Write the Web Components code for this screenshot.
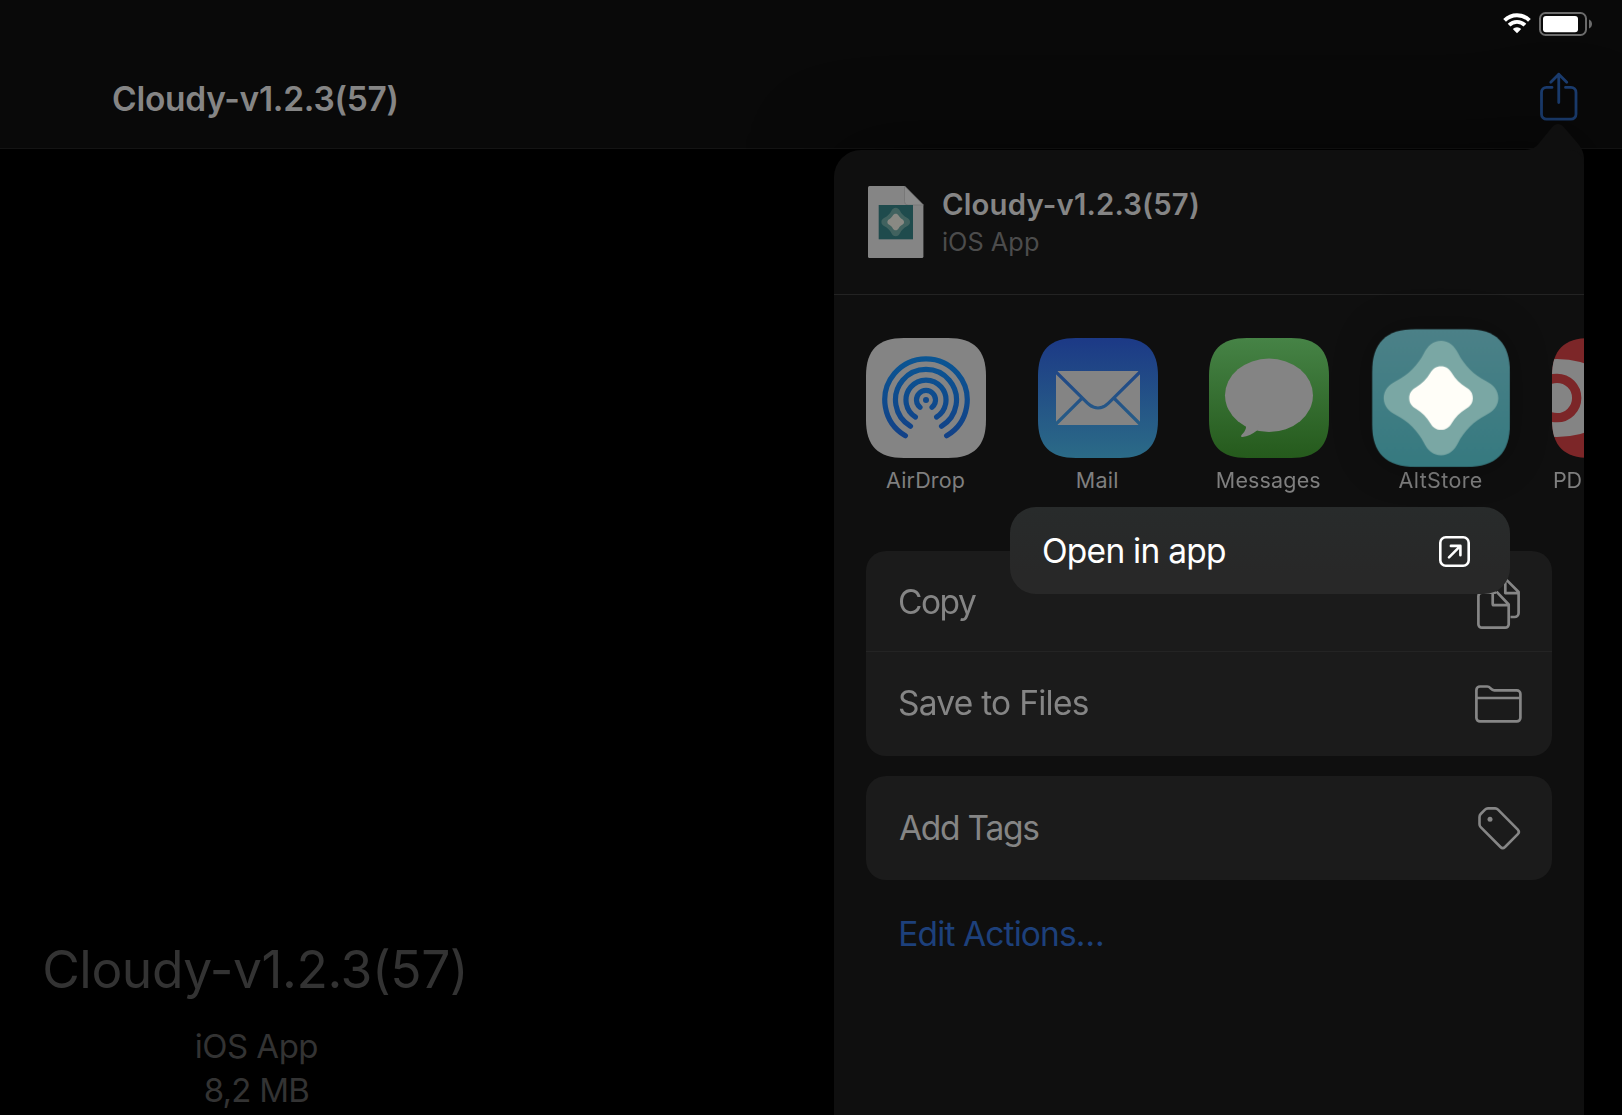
<!DOCTYPE html>
<html lang="en">
<head>
<meta charset="utf-8">
<title>Cloudy-v1.2.3(57)</title>
<style>
html,body{margin:0;background:#000}
body{width:1622px;height:1115px;overflow:hidden;font-family:Inter,"Liberation Sans",sans-serif;color:#858585}
</style>
</head>
<body>
<file-screen></file-screen>
<script>
const define = (name, html, extra) => customElements.define(name, class extends HTMLElement {
  constructor() {
    super();
    const t = document.createElement('template');
    t.innerHTML = html;
    this.attachShadow({mode: 'open'}).append(t.content.cloneNode(true));
  }
  connectedCallback() { if (extra) extra(this, this.shadowRoot); }
});

// Single line of text whose glyph box is exactly `ink` pixels wide; tracking absorbs the difference.
define('ui-label', `<style>
:host{display:block;flex:none;white-space:nowrap}
span{display:block;width:max-content}
</style><span></span>`, (host, root) => {
  const span = root.querySelector('span');
  const text = host.getAttribute('text');
  const size = +host.getAttribute('size'), weight = host.getAttribute('weight') || 400;
  const ink = +host.getAttribute('ink');
  const ctx = document.createElement('canvas').getContext('2d');
  ctx.font = `${weight} ${size}px Inter, "Liberation Sans", sans-serif`;
  const m = ctx.measureText(text);
  const natural = m.actualBoundingBoxLeft + m.actualBoundingBoxRight;
  span.textContent = text;
  span.style.font = `${weight} ${size}px/${Math.round(size * 1.3)}px Inter, "Liberation Sans", sans-serif`;
  span.style.letterSpacing = ((ink - natural) / (text.length - 1)).toFixed(3) + 'px';
  span.style.marginLeft = m.actualBoundingBoxLeft.toFixed(2) + 'px';
  host.style.width = ink + 'px';
});

const ICONS = {
  wifi: [28, 21, `<g fill="none" stroke="#fff" stroke-width="3.9"><path d="M1.6 7.3a17.6 17.6 0 0 1 24.8 0"/><path d="M6.1 12.1a11.2 11.2 0 0 1 15.8 0"/></g><path d="M14 20.3l-4.2-4.3a6 6 0 0 1 8.4 0z" fill="#fff"/>`],
  battery: [54, 24, `<rect x="1" y="1" width="46" height="22" rx="5.5" fill="none" stroke="#6b6b6b" stroke-width="2"/><rect x="4" y="4" width="35" height="16.3" rx="3" fill="#fff"/><path d="M50 7.5c4 1.6 4 7.400 0 9z" fill="#6b6b6b"/>`],
  share: [40, 50, `<g fill="none" stroke="#1b3d70" stroke-width="2.8" stroke-linecap="round" stroke-linejoin="round"><path d="M13 15.400H7.500a5 5 0 0 0-5 5V42.200a5 5 0 0 0 5 5H32a5 5 0 0 0 5-5V20.400a5 5 0 0 0-5-5H26.500M19.750 2.200V30.500M11.750 10.200l8-8 8 8"/></g>`],
  open: [31, 31, `<g fill="none" stroke="#fff" stroke-width="2.600" stroke-linecap="round" stroke-linejoin="round"><rect x="1.300" y="1.300" width="28.400" height="28.400" rx="5.500"/><path d="M10 21.300L21.400 9.900M11.900 9.900h9.500v9.300"/></g>`],
  copy: [48, 56, `<g fill="none" stroke="#868686" stroke-width="2.700" stroke-linejoin="round"><path d="M17.500 13.600V8.400a3.500 3.500 0 0 1 3.500-3.500H29.500L41.600 17V38a4 4 0 0 1-4 4H33.500M28.300 6V18.100H41.600M18.900 17.600H4.900a3.500 3.500 0 0 0-3.500 3.500V49.200a3.500 3.500 0 0 0 3.500 3.500H28.200a3.500 3.500 0 0 0 3.500-3.500V29.500L19.500 16.600M15.700 17.600V29a1.200 1.200 0 0 0 1.200 1.200H31.700"/></g>`],
  folder: [47, 38, `<g fill="none" stroke="#868686" stroke-width="2.700" stroke-linejoin="round"><path d="M1.400 33V5A3.600 3.600 0 0 1 5 1.500H12.200C15.700 1.500 15.600 5.300 19.200 5.300H41.800A3.600 3.600 0 0 1 45.400 8.900V33A3.600 3.600 0 0 1 41.800 36.400H5A3.600 3.600 0 0 1 1.400 33zM1.400 13H45.400"/></g>`],
  tag: [44, 43, `<path d="M7 2.600Q8.200 1.400 10 1.400H17.200Q18.800 1.400 20 2.600L39.800 22.600Q42 25 39.800 27.200L27 40Q24.700 42.200 22.500 40L2.700 20.200Q1.500 19 1.500 17.200V10Q1.500 8.200 2.700 7z" fill="none" stroke="#868686" stroke-width="2.600"/><circle cx="12" cy="12.200" r="2.500" fill="#868686"/>`]
};
define('ui-icon', `<style>:host{display:block;flex:none;line-height:0}svg{display:block;overflow:visible}</style>`, (host, root) => {
  const [w, h, body] = ICONS[host.getAttribute('name')];
  const t = document.createElement('template');
  t.innerHTML = `<svg width="${w}" height="${h}" viewBox="0 0 ${w} ${h}">${body}</svg>`;
  root.append(t.content);
});

const DIAMOND = 'M0-57.300C8-57.300 13.500-52 17-45C23-33 33-23 45-17C52-13.500 57.300-8 57.300 0C57.300 8 52 13.500 45 17C33 23 23 33 17 45C13.500 52 8 57.300 0 57.300C-8 57.300-13.500 52-17 45C-23 33-33 23-45 17C-52 13.500-57.300 8-57.300 0C-57.300-8-52-13.500-45-17C-33-23-23-33-17-45C-13.500-52-8-57.300 0-57.300Z';
const CORE = 'M0-57.300C9-57.300 15-53 19.500-45C26-34 34-26 45-19.500C53-15 57.300-9 57.300 0C57.300 9 53 15 45 19.500C34 26 26 34 19.500 45C15 53 9 57.300 0 57.300C-9 57.300-15 53-19.500 45C-26 34-34 26-45 19.500C-53 15-57.300 9-57.300 0C-57.300-9-53-15-45-19.500C-34-26-26-34-19.500-45C-15-53-9-57.300 0-57.300Z';
const SQUIRCLE = 'M0 38C0 12 12 0 38 0H82C108 0 120 12 120 38V82C120 108 108 120 82 120H38C12 120 0 108 0 82Z';
const grad = (a, b, id = 'g') => `<linearGradient id="${id}" x1="0" y1="0" x2="0" y2="120" gradientUnits="userSpaceOnUse"><stop stop-color="${a}"/><stop offset="1" stop-color="${b}"/></linearGradient>`;
const APPS = {
  airdrop: `<defs>${grad('#085a96', '#153c84')}</defs><path d="${SQUIRCLE}" fill="#848484"/>
    <g fill="none" stroke="url(#g)" stroke-width="5.200" stroke-linecap="round"><path d="M39.400 97.700A41.200 41.200 0 1 1 80.600 97.700"/><path d="M44.500 88.200A30.500 30.500 0 1 1 75.500 88.200"/><path d="M49.400 79A20 20 0 1 1 70.600 79"/><path d="M54 69.300A9.500 9.500 0 1 1 66 69.300"/></g><circle cx="60" cy="62" r="3" fill="#10488a"/>`,
  mail: `<defs>${grad('#1c3986', '#2b6b87')}</defs><path d="${SQUIRCLE}" fill="url(#g)"/><rect x="18" y="33" width="84" height="54" rx="2.500" fill="#848484"/>
    <path d="M17 33L49.500 65.200Q54.500 70 60 70T70.500 65.200L103 33M43.700 60.500L17 87M76.300 60.500L103 87" fill="none" stroke="url(#g)" stroke-width="3.200"/>`,
  messages: `<defs>${grad('#468346', '#255a1c')}</defs><path d="${SQUIRCLE}" fill="url(#g)"/><ellipse cx="60" cy="57.300" rx="44" ry="36.700" fill="#848484"/><path d="M36 86Q39 91 32.500 97Q31.300 99 33.500 99Q41 98 48 92.500L50 86z" fill="#848484"/>`,
  altstore: `<defs>${grad('#4c8188', '#367a80')}</defs><path d="${SQUIRCLE}" fill="url(#g)"/><g transform="translate(60 60) scale(.8696)"><path d="${DIAMOND}" fill="#7aa7a4"/><path d="${CORE}" transform="scale(.555)" fill="#fffef8"/></g>`,
  pdf: `<defs><clipPath id="c"><path d="${SQUIRCLE}"/></clipPath></defs><g clip-path="url(#c)"><path d="M0 0H120V120H0z" fill="#7c2628"/><ellipse cx="5" cy="60" rx="61" ry="39" fill="#848484"/><circle cx="5" cy="60" r="19.700" fill="none" stroke="#7c2628" stroke-width="9.300"/></g>`
};
define('share-app', `<style>
:host{display:flex;flex-direction:column;align-items:center;flex:none;width:120px;color:#7f7f7f}
.art{width:120px;height:120px;margin-bottom:9px}
:host([lifted]) .art{transform:scale(1.15);filter:drop-shadow(0 0 16px rgba(0,0,0,.3))}
::slotted(*){margin:-.6px 1.200px 0 0}
svg{display:block}
</style><div class="art"></div><slot></slot>`, (host, root) => {
  root.querySelector('.art').innerHTML = `<svg width="120" height="120" viewBox="0 0 120 120">${APPS[host.getAttribute('app')]}</svg>`;
});

define('action-group', `<style>
:host{display:flex;flex-direction:column;background:#1b1b1b;border-radius:20px;overflow:hidden}
</style><slot></slot>`);
define('action-row', `<style>
:host{display:flex;align-items:center;justify-content:space-between;box-sizing:border-box;height:var(--h,104px);padding:var(--t,0px) var(--r,30px) 0 var(--l,33px)}
:host([divided]){border-bottom:1px solid #242424}
</style><slot></slot>`);

define('status-bar', `<style>
:host{display:flex;justify-content:flex-end;gap:8px;height:48px;padding:12px 29px 0 0;box-sizing:border-box}
ui-icon[name=wifi]{margin-top:1px}
</style><ui-icon name="wifi"></ui-icon><ui-icon name="battery"></ui-icon>`);

define('nav-bar', `<style>
:host{display:block;height:149px;box-sizing:border-box;background:#090909;border-bottom:1px solid #141414}
.row{display:flex;justify-content:space-between;align-items:center;height:100px;padding:0 43px 0 113px}
ui-label{margin-top:1.500px}
ui-icon{margin-bottom:3px}
</style><status-bar></status-bar><div class="row"><ui-label text="Cloudy-v1.2.3(57)" size="33.500" weight="600" ink="283.500"></ui-label><ui-icon name="share"></ui-icon></div>`);

define('file-summary', `<style>
:host{display:flex;flex-direction:column;align-items:center;width:509px;color:#333}
.name{height:68px;margin-bottom:21px}
.meta{margin-left:4px}
.size{margin-top:1px}
</style><ui-label class="name" text="Cloudy-v1.2.3(57)" size="51.500" ink="418.700"></ui-label>
<ui-label class="meta" text="iOS App" size="33" ink="121.700"></ui-label>
<ui-label class="meta size" text="8,2 MB" size="33" ink="103.700"></ui-label>`);

define('file-badge', `<style>:host{display:block;flex:none}svg{display:block}</style>
<svg width="56" height="72" viewBox="0 0 56 72"><path d="M1.500 0H36.500L55.400 19V70.500Q55.400 72 53.900 72H1.500Q0 72 0 70.500V1.500Q0 0 1.500 0z" fill="#858585"/><path d="M36.500 0V15.500Q36.500 19 40 19H55.400z" fill="#8b8b8b" stroke="#747474" stroke-width=".8"/><rect x="10.700" y="19" width="34.300" height="34.300" fill="#1f4b4d"/><g transform="translate(27.700 36)"><path d="${DIAMOND}" transform="scale(.25)" fill="#41625f"/><path d="${CORE}" transform="scale(.145)" fill="#898983"/></g></svg>`);

define('share-header', `<style>
:host{display:flex;gap:18.600px;align-items:center;height:145px;padding-left:34.300px;box-sizing:border-box;border-bottom:1px solid #232323}
file-badge{margin-bottom:.5px}
.t{display:flex;flex-direction:column;gap:1px;margin-top:-1px}
.sub{color:#4c4c4c}
</style><file-badge></file-badge><div class="t"><ui-label text="Cloudy-v1.2.3(57)" size="29.300" weight="600" ink="255"></ui-label><ui-label class="sub" text="iOS App" size="25.300" ink="96"></ui-label></div>`);

define('share-sheet', `<style>
:host{display:block;width:750px;height:965px;position:relative;filter:drop-shadow(0 0 40px rgba(0,0,0,.5))}
.arrow{position:absolute;right:0;top:-27px;display:block}
.panel{height:100%;background:#0f0f0f;border-radius:27px 14px 0 0;overflow:hidden;position:relative}
.apps{display:flex;gap:51.600px;padding:43px 0 0 32px;height:256px;box-sizing:border-box}
.pd{align-self:flex-start;margin-left:1.500px}
.actions{display:flex;flex-direction:column;gap:20px;padding:0 32px}
.edit{color:#1d407b;--h:66px;--l:34.300px;--t:1px}
.copy{margin-top:3px}
</style>
<svg class="arrow" width="62" height="60" viewBox="0 0 62 60"><path d="M0 28V27C9 27 12 25.500 16 21.500L29 5.500Q36-3.500 43 5.500L55.500 20Q61.700 27.500 62 35V60H0z" fill="#0f0f0f"/></svg>
<div class="panel">
<share-header></share-header>
<div class="apps">
<share-app app="airdrop"><ui-label text="AirDrop" size="21.500" ink="78.700"></ui-label></share-app>
<share-app app="mail"><ui-label text="Mail" size="21.500" ink="40.300"></ui-label></share-app>
<share-app app="messages"><ui-label text="Messages" size="21.500" ink="103.500"></ui-label></share-app>
<share-app app="altstore" lifted><ui-label text="AltStore" size="21.500" ink="83.300"></ui-label></share-app>
<share-app app="pdf"><ui-label class="pd" text="PD" size="21.500" ink="27.500"></ui-label></share-app>
</div>
<div class="actions">
<action-group>
<action-row divided style="--h:101px;--r:27px;--t:1px"><ui-label text="Copy" size="33.500" ink="77"></ui-label><ui-icon class="copy" name="copy"></ui-icon></action-row>
<action-row><ui-label style="margin-top:-1.500px" text="Save to Files" size="33.500" ink="188.700"></ui-label><ui-icon name="folder"></ui-icon></action-row>
</action-group>
<action-group><action-row style="--r:30px"><ui-label style="margin-top:-1px" text="Add Tags" size="33.500" ink="139.300"></ui-label><ui-icon name="tag"></ui-icon></action-row></action-group>
<action-row class="edit"><ui-label text="Edit Actions…" size="33.500" ink="202.500"></ui-label></action-row>
</div>
</div>`);

define('context-menu', `<style>
:host{display:flex;align-items:center;justify-content:space-between;width:500px;height:87px;box-sizing:border-box;padding:1px 40.300px 0 33px;border-radius:26px;background:linear-gradient(180deg,#282b2b,#282828 75%);color:#fff}
</style><ui-label text="Open in app" size="33.500" ink="182"></ui-label><ui-icon name="open"></ui-icon>`);

define('file-screen', `<style>
:host{display:flex;flex-direction:column;position:relative;width:1622px;height:1115px;overflow:hidden;background:#000}
file-summary{margin-top:787px}
share-sheet{position:absolute;left:834px;top:150px}
context-menu{position:absolute;left:1010px;top:507px}
</style><nav-bar></nav-bar><file-summary></file-summary><share-sheet></share-sheet><context-menu></context-menu>`);
</script>
</body>
</html>
